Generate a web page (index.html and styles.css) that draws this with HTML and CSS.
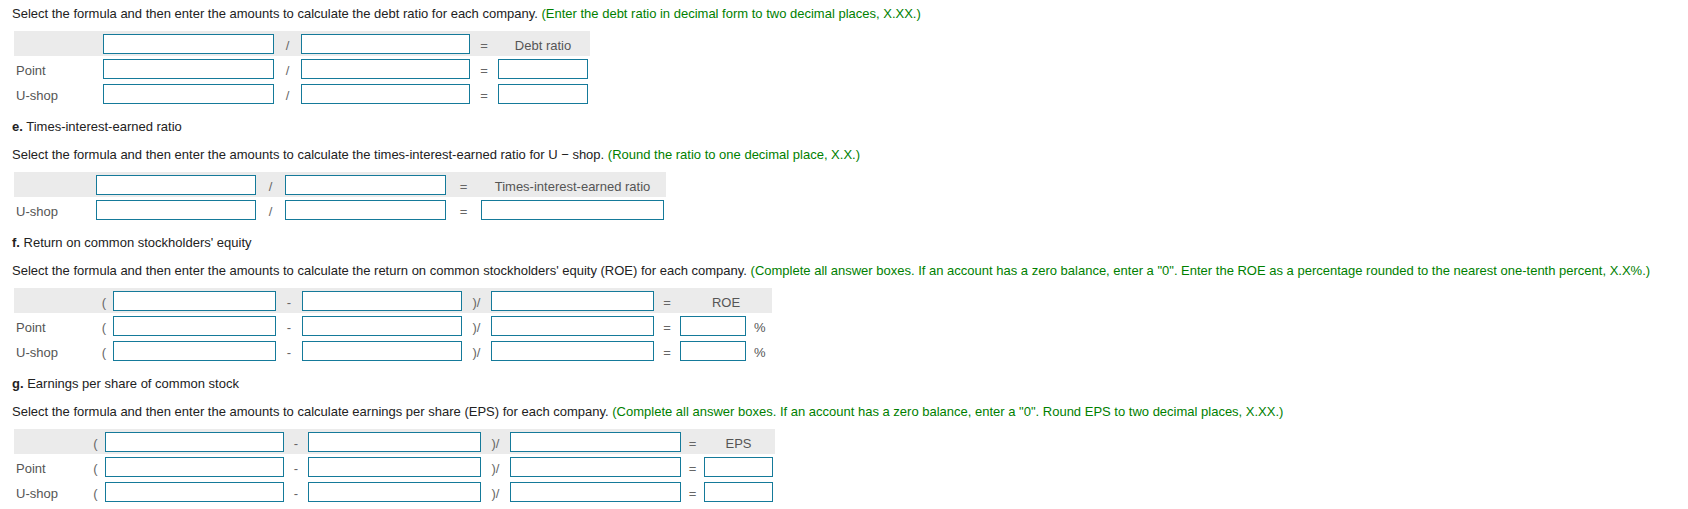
FILE: index.html
```html
<!DOCTYPE html>
<html lang="en">
<head>
<meta charset="utf-8">
<title>Ratios</title>
<link rel="stylesheet" href="styles.css">
</head>
<body>
<div class="page">
  <p class="q lead">Select the formula and then enter the amounts to calculate the debt ratio for each company. <span class="hint">(Enter the debt ratio in decimal form to two decimal places, X.XX.)</span></p>
  <div class="tbl">
    <div class="row hdr t-d"><span></span><input class="box" type="text"><span class="op">/</span><input class="box" type="text"><span class="op">=</span><span class="colh">Debt ratio</span></div>
    <div class="row t-d"><span class="lbl">Point</span><input class="box" type="text"><span class="op">/</span><input class="box" type="text"><span class="op">=</span><input class="box" type="text"></div>
    <div class="row t-d"><span class="lbl">U-shop</span><input class="box" type="text"><span class="op">/</span><input class="box" type="text"><span class="op">=</span><input class="box" type="text"></div>
  </div>

  <p class="head"><b>e.</b> Times-interest-earned ratio</p>
  <p class="q">Select the formula and then enter the amounts to calculate the times-interest-earned ratio for U − shop. <span class="hint">(Round the ratio to one decimal place, X.X.)</span></p>
  <div class="tbl">
    <div class="row hdr t-e"><span></span><input class="box" type="text"><span class="op">/</span><input class="box" type="text"><span class="op">=</span><span class="colh">Times-interest-earned ratio</span></div>
    <div class="row t-e"><span class="lbl">U-shop</span><input class="box" type="text"><span class="op">/</span><input class="box" type="text"><span class="op">=</span><input class="box" type="text"></div>
  </div>

  <p class="head"><b>f.</b> Return on common stockholders' equity</p>
  <p class="q">Select the formula and then enter the amounts to calculate the return on common stockholders' equity (ROE) for each company. <span class="hint">(Complete all answer boxes. If an account has a zero balance, enter a "0". Enter the ROE as a percentage rounded to the nearest one-tenth percent, X.X%.)</span></p>
  <div class="tbl">
    <div class="row hdr t-f"><span></span><span class="op">(</span><input class="box" type="text"><span class="op">-</span><input class="box" type="text"><span class="op">)/</span><input class="box" type="text"><span class="op">=</span><span class="colh span2">ROE</span></div>
    <div class="row t-f"><span class="lbl">Point</span><span class="op">(</span><input class="box" type="text"><span class="op">-</span><input class="box" type="text"><span class="op">)/</span><input class="box" type="text"><span class="op">=</span><input class="box" type="text"><span class="pct">%</span></div>
    <div class="row t-f"><span class="lbl">U-shop</span><span class="op">(</span><input class="box" type="text"><span class="op">-</span><input class="box" type="text"><span class="op">)/</span><input class="box" type="text"><span class="op">=</span><input class="box" type="text"><span class="pct">%</span></div>
  </div>

  <p class="head"><b>g.</b> Earnings per share of common stock</p>
  <p class="q">Select the formula and then enter the amounts to calculate earnings per share (EPS) for each company. <span class="hint">(Complete all answer boxes. If an account has a zero balance, enter a "0". Round EPS to two decimal places, X.XX.)</span></p>
  <div class="tbl">
    <div class="row hdr t-g"><span></span><span class="op">(</span><input class="box" type="text"><span class="op">-</span><input class="box" type="text"><span class="op">)/</span><input class="box" type="text"><span class="op">=</span><span class="colh">EPS</span></div>
    <div class="row t-g"><span class="lbl">Point</span><span class="op">(</span><input class="box" type="text"><span class="op">-</span><input class="box" type="text"><span class="op">)/</span><input class="box" type="text"><span class="op">=</span><input class="box" type="text"></div>
    <div class="row t-g"><span class="lbl">U-shop</span><span class="op">(</span><input class="box" type="text"><span class="op">-</span><input class="box" type="text"><span class="op">)/</span><input class="box" type="text"><span class="op">=</span><input class="box" type="text"></div>
  </div>
</div>
</body>
</html>
```

FILE: styles.css
```css
* { box-sizing: border-box; }

html, body {
  margin: 0;
  padding: 0;
  background: #ffffff;
}

body {
  font-family: "Liberation Sans", Arial, sans-serif;
  font-size: 13px;
  color: #222222;
}

.page {
  padding: 6px 12px 0;
}

.q, .head {
  margin: 0;
  line-height: 16px;
  white-space: nowrap;
}

.head {
  margin-top: 13px;
}

.head b {
  font-weight: bold;
}

.q {
  margin-top: 12px;
}

.q.lead {
  margin-top: 0;
}

.hint {
  color: #008000;
}

.tbl {
  margin: 9px 0 0 2px;
}

.row {
  display: grid;
  width: max-content;
  height: 25px;
  align-items: start;
}

.hdr {
  background: #ebebeb;
}

.t-d { grid-template-columns: 89px 171px 27px 169px 28px 90px 2px; }
.t-e { grid-template-columns: 82px 160px 29px 161px 35px 183px 2px; }
.t-f { grid-template-columns: 81px 18px 163px 26px 160px 29px 163px 26px 66px 26px; }
.t-g { grid-template-columns: 72px 19px 179px 24px 173px 29px 171px 23px 69px 2px; }

.lbl, .op, .colh, .pct {
  padding-top: 4px;
  line-height: 21px;
  white-space: nowrap;
}

.lbl {
  padding-left: 2px;
  color: #555555;
}

.op {
  text-align: center;
  color: #666666;
}

.pct {
  padding-left: 8px;
  color: #555555;
}

.colh {
  text-align: center;
  color: #555555;
}

.span2 {
  grid-column: span 2;
}

.box {
  display: block;
  width: 100%;
  height: 20px;
  margin: 3px 0 0;
  padding: 0 3px;
  border: 1px solid #157a9a;
  border-radius: 0;
  background: #ffffff;
  font: inherit;
  outline: none;
}
```
